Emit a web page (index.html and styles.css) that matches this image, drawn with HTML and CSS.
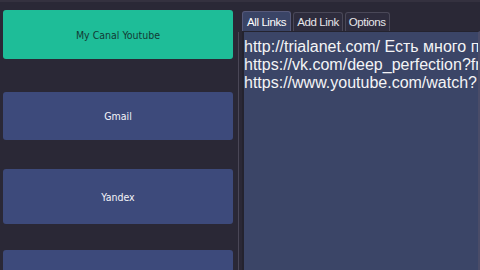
FILE: index.html
```html
<!DOCTYPE html>
<html>
<head>
<meta charset="utf-8">
<link rel="stylesheet" href="styles.css">
</head>
<body>
<div class="app">
  <div class="sidebar">
    <div class="btn btn-green btn-first">My Canal Youtube</div>
    <div class="btn btn-blue btn-second">Gmail</div>
    <div class="btn btn-blue btn-third">Yandex</div>
    <div class="btn btn-blue"></div>
  </div>
  <div class="divider"><div class="divider-line"></div></div>
  <div class="main">
    <div class="tabs">
      <div class="tab tab-active">All Links</div>
      <div class="tab">Add Link</div>
      <div class="tab">Options</div>
    </div>
    <div class="content">
      <div class="line">http://trialanet.com/ Есть много п</div>
      <div class="line">https://vk.com/deep_perfection?fr</div>
      <div class="line">https://www.youtube.com/watch?</div>
    </div>
  </div>
</div>
</body>
</html>
```
FILE: styles.css
```css
html, body {
  margin: 0;
  padding: 0;
}
body {
  width: 480px;
  height: 270px;
  overflow: hidden;
  background: #2a2836;
  font-family: "DejaVu Sans Condensed", "DejaVu Sans", sans-serif;
}
.app {
  display: flex;
  height: 270px;
  border-top: 2px solid #34313f;
  box-sizing: border-box;
  overflow: hidden;
}
.sidebar {
  width: 230px;
  padding: 8px 0 0 3px;
  display: flex;
  flex-direction: column;
  flex-shrink: 0;
}
.btn {
  height: 49px;
  border-radius: 3px;
  display: flex;
  align-items: center;
  justify-content: center;
  font-size: 10.5px;
  flex-shrink: 0;
}
.btn-first {
  margin-bottom: 33px;
}
.btn-second {
  height: 48px;
  margin-bottom: 29px;
}
.btn-third {
  height: 55px;
  margin-bottom: 26px;
}
.btn-green {
  background: #1ebd98;
  color: #133a35;
}
.btn-blue {
  background: #3d4a7b;
  color: #f4f4f8;
}
.divider {
  width: 9px;
  display: flex;
  justify-content: center;
  flex-shrink: 0;
}
.divider-line {
  width: 1px;
  margin-top: 30px;
  margin-left: 1px;
  background: #4a4757;
}
.main {
  flex: 1;
  display: flex;
  flex-direction: column;
  padding-top: 9px;
  min-width: 0;
}
.tabs {
  display: flex;
  align-items: flex-end;
  height: 20px;
}
.tab {
  height: 19px;
  box-sizing: border-box;
  padding: 0 3px;
  border: 1px solid #4a4858;
  border-bottom: none;
  border-radius: 3px 3px 0 0;
  background: #2e2c3d;
  color: #e6e6ea;
  font-family: "Liberation Sans", sans-serif;
  font-size: 11.5px;
  letter-spacing: -0.4px;
  display: flex;
  align-items: center;
  margin-right: 2px;
}
.tab-active {
  height: 20px;
  background: #3a4466;
  color: #ffffff;
  border-color: #56597a;
  padding: 0 4px;
}
.content {
  flex: 1;
  background: #3b4567;
  border-top: 1px solid #24232f;
  border-left: 2px solid #24232f;
  border-right: 2px solid #4a4c68;
  padding: 6px 0 0 0;
  color: #f4f4f6;
  font-family: "Liberation Sans", sans-serif;
  font-size: 16px;
  line-height: 18px;
  white-space: nowrap;
  overflow: hidden;
}
```
